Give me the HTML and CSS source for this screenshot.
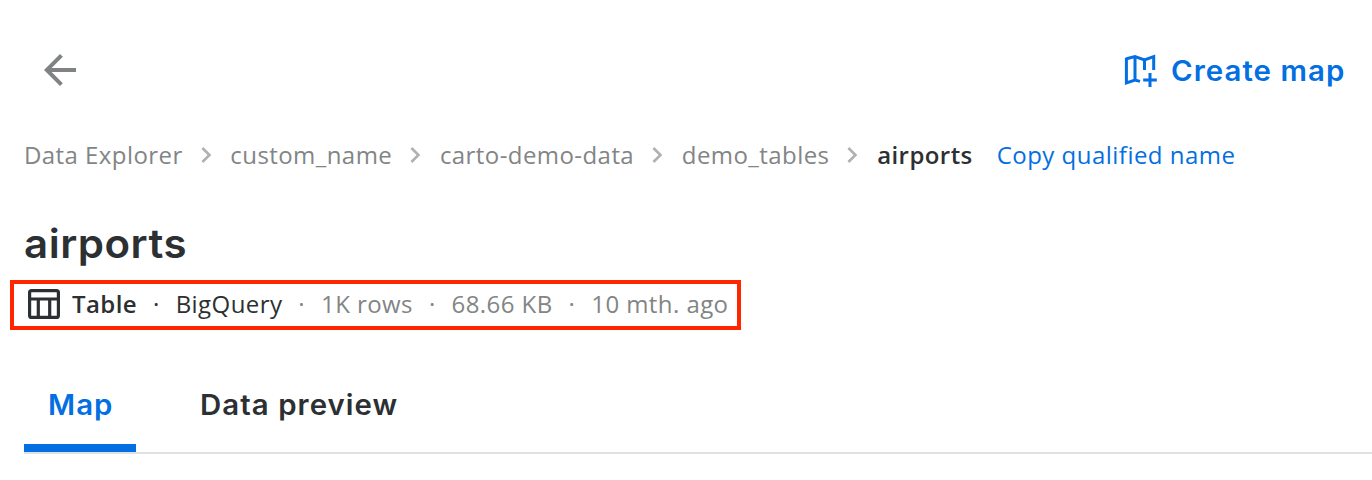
FILE: index.html
```html
<!DOCTYPE html>
<html lang="en">
<head>
<meta charset="utf-8">
<title>airports</title>
<link rel="stylesheet" href="styles.css">
</head>
<body>
<header class="topbar">
  <svg class="back" viewBox="0 0 24 24"><path d="M20 11H7.83l5.59-5.59L12 4l-8 8 8 8 1.41-1.41L7.83 13H20z"/></svg>
  <a class="create">
    <svg class="map-icon" viewBox="0 0 36 36"><path d="M3.4 5.8 12 3.5 21.5 6.8 30.7 3.6V17M21.5 6.8V17M3.4 4.8V29.9L12 27 17 28.4M12 3.5V27M27 20V34M20.2 27H33.8"/></svg>
    <span class="create-text wide">Create map</span>
  </a>
</header>
<nav class="crumbs">
  <span>Data Explorer</span>
  <svg class="chev" viewBox="0 0 24 24"><path d="M10 6 8.59 7.41 13.17 12l-4.58 4.59L10 18l6-6z"/></svg>
  <span>custom_name</span>
  <svg class="chev" viewBox="0 0 24 24"><path d="M10 6 8.59 7.41 13.17 12l-4.58 4.59L10 18l6-6z"/></svg>
  <span>carto-demo-data</span>
  <svg class="chev" viewBox="0 0 24 24"><path d="M10 6 8.59 7.41 13.17 12l-4.58 4.59L10 18l6-6z"/></svg>
  <span>demo_tables</span>
  <svg class="chev" viewBox="0 0 24 24"><path d="M10 6 8.59 7.41 13.17 12l-4.58 4.59L10 18l6-6z"/></svg>
  <span class="current">airports</span>
  <a class="copy">Copy qualified name</a>
</nav>
<h1 class="title"><span class="wide">airports</span></h1>
<div class="meta">
  <svg class="table-icon" viewBox="0 0 32 32"><rect x="1.6" y="1.6" width="28.8" height="26.8" rx="2"/><path d="M1.5 10H30.5M10.3 10V28.5M21.7 10V28.5"/></svg>
  <span class="type">Table</span><span class="dot dark">·</span><span class="source">BigQuery</span><span class="dot">·</span><span>1K rows</span><span class="dot">·</span><span>68.66 KB</span><span class="dot">·</span><span>10 mth. ago</span>
</div>
<div class="tabs">
  <a class="tab active"><span class="wide">Map</span></a>
  <a class="tab"><span class="wide">Data preview</span></a>
</div>
</body>
</html>
```
FILE: styles.css
```css
* { box-sizing: border-box; }
body {
  margin: 0;
  height: 480px;
  overflow: hidden;
  background: #fff;
  color: #2c3032;
  font: 24px/40px "Open Sans", sans-serif;
  letter-spacing: 0.43px;
}
.topbar {
  display: flex;
  justify-content: space-between;
  align-items: center;
  height: 48px;
  margin-top: 46px;
  padding: 0 28px 0 36px;
}
.back { width: 48px; height: 48px; fill: #7f8383; }
.create { display: flex; align-items: center; gap: 12px; padding-top: 2px; color: #036fe2; }
.map-icon { width: 36px; height: 36px; fill: none; stroke: #036fe2; stroke-width: 3; }
.create-text { width: 173px; font: 600 28px/40px Inter, sans-serif; letter-spacing: 1px; }
.wide { display: inline-block; transform: scaleX(1.05); transform-origin: left; }
.crumbs {
  display: flex;
  align-items: center;
  height: 40px;
  margin-top: 41px;
  padding-left: 24px;
  color: #828585;
  white-space: nowrap;
}
.chev { flex: none; width: 32px; height: 32px; margin: 0 8.7px 0 7px; fill: #b0b2b2; }
.current { color: #2c3032; font-weight: 600; }
.copy { margin-left: 24px; color: #036fe2; letter-spacing: 0.48px; }
.title {
  margin: 45px 0 0 24px;
  height: 48px;
  font: 600 40px/48px Inter, sans-serif;
  letter-spacing: 0.5px;
}
.meta {
  display: flex;
  align-items: center;
  width: 731px;
  height: 50px;
  margin: 12px 0 0 10px;
  padding: 0 0 2px 14px;
  border: 4px solid #ff2600;
  color: #828585;
  white-space: nowrap;
}
.table-icon { flex: none; width: 32px; height: 32px; margin: 2px 12px 0 0; fill: none; stroke: #2c3032; stroke-width: 3.2; }
.type { color: #2c3032; font-weight: 600; }
.source, .dark { color: #2c3032; }
.dot { flex: none; width: 38.6px; text-align: center; }
.tabs {
  display: flex;
  height: 94px;
  margin: 30px 0 0 24px;
  border-bottom: 2px solid #dfe0e0;
}
.tab { height: 92px; padding: 25px 24px; font: 600 28px/40px Inter, sans-serif; letter-spacing: 1px; }
.active { width: 112px; margin-right: 40px; border-bottom: 8px solid #036fe2; color: #036fe2; }
```
